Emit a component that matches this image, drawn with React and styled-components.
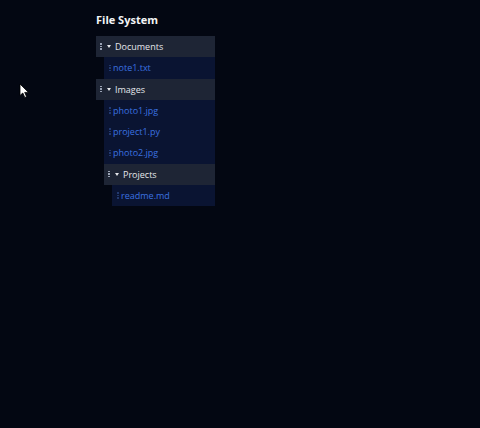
import styled, { createGlobalStyle } from 'styled-components'

const Global = createGlobalStyle`
  html, body {
    margin: 0;
    padding: 0;
    background: #030712;
    font-family: "Open Sans", "Noto Sans", sans-serif;
  }
  #root { min-height: 428px; }
`

const Page = styled.div`
  position: relative;
  width: 480px;
  height: 428px;
  background: #030712;
  padding: 12px 0 0 96px;
  box-sizing: border-box;
`

const Title = styled.h1`
  margin: 0 0 8px 0;
  font-size: 11px;
  line-height: 16px;
  font-weight: 700;
  color: #f3f4f6;
`

const Tree = styled.div`
  width: 119px;
  display: flex;
  flex-direction: column;
`

const Children = styled.div`
  display: flex;
  flex-direction: column;
  padding-left: 8px;
`

const Row = styled.div`
  height: 21.25px;
  display: flex;
  align-items: center;
  box-sizing: border-box;
  font-size: 9px;
  background: ${p => (p.$folder ? '#1e2535' : '#0a1432')};
  color: ${p => (p.$folder ? '#e5e7eb' : '#3b72e0')};
  padding-left: ${p => (p.$folder ? '4px' : '5px')};
`

const Handle = styled.span`
  width: 2px;
  display: flex;
  flex-direction: column;
  gap: 1px;
  margin-right: ${p => (p.$folder ? '5px' : '2px')};
  i {
    width: 1.5px;
    height: 1.5px;
    background: ${p => (p.$folder ? '#9aa3b5' : '#22396e')};
    display: block;
  }
`

const Caret = styled.span`
  width: 0;
  height: 0;
  border-left: 2px solid transparent;
  border-right: 2px solid transparent;
  border-top: 3px solid #e5e7eb;
  margin-right: 4px;
`

const Cursor = styled.svg`
  position: absolute;
  left: 19px;
  top: 83px;
`

const tree = [
  { name: 'Documents', children: [{ name: 'note1.txt' }] },
  {
    name: 'Images',
    children: [
      { name: 'photo1.jpg' },
      { name: 'project1.py' },
      { name: 'photo2.jpg' },
      { name: 'Projects', children: [{ name: 'readme.md' }] },
    ],
  },
]

function Dots({ folder }) {
  return (
    <Handle $folder={folder}>
      <i /><i /><i />
    </Handle>
  )
}

function Node({ node }) {
  const folder = !!node.children
  return (
    <>
      <Row $folder={folder}>
        <Dots folder={folder} />
        {folder && <Caret />}
        {node.name}
      </Row>
      {folder && (
        <Children>
          {node.children.map(c => (
            <Node key={c.name} node={c} />
          ))}
        </Children>
      )}
    </>
  )
}

export default function App() {
  return (
    <>
      <Global />
      <Page>
        <Title>File System</Title>
        <Tree>
          {tree.map(n => (
            <Node key={n.name} node={n} />
          ))}
        </Tree>
        <Cursor width="12" height="16" viewBox="0 0 12 16">
          <path d="M1 1 L1 12.5 L3.8 10 L5.8 14.5 L7.6 13.7 L5.7 9.4 L9.5 9.4 Z" fill="#fff" stroke="#000" strokeWidth="0.8" />
        </Cursor>
      </Page>
    </>
  )
}
